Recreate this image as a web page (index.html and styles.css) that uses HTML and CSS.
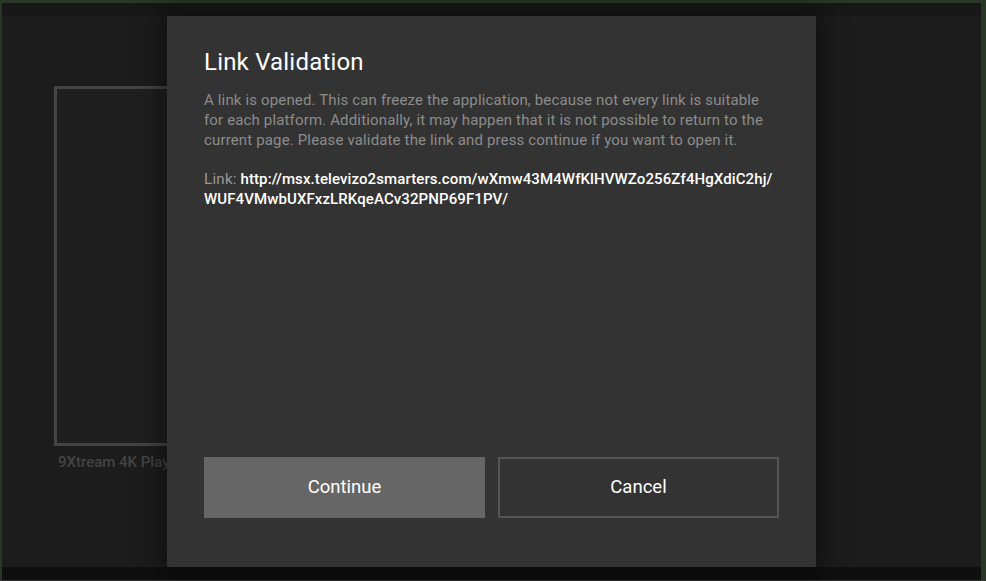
FILE: index.html
```html
<!DOCTYPE html>
<html>
<head>
<meta charset="utf-8">
<link rel="stylesheet" href="styles.css">
</head>
<body>
<div class="screen">
  <div class="app">
    <div class="topbar"></div>
    <div class="content">
      <div class="tile">
        <div class="tile-frame"></div>
        <div class="tile-label">9Xtream 4K Player</div>
      </div>
    </div>
    <div class="bottombar"></div>
  </div>
  <div class="dialog">
    <h1 class="title">Link Validation</h1>
    <p class="desc">A link is opened. This can freeze the application, because not every link is suitable for each platform. Additionally, it may happen that it is not possible to return to the current page. Please validate the link and press continue if you want to open it.</p>
    <p class="link"><span class="link-label">Link:</span> <span class="link-url">http://msx.televizo2smarters.com/wXmw43M4WfKlHVWZo256Zf4HgXdiC2hj/ WUF4VMwbUXFxzLRKqeACv32PNP69F1PV/</span></p>
    <div class="actions">
      <div class="btn btn-primary">Continue</div>
      <div class="btn btn-secondary">Cancel</div>
    </div>
  </div>
</div>
</body>
</html>
```

FILE: styles.css
```css
html, body {
  margin: 0;
  padding: 0;
  background: #2a3728;
  font-family: Roboto, "Liberation Sans", sans-serif;
}

.screen {
  position: relative;
  width: 986px;
  height: 581px;
  padding: 3px 5px 1px 2px;
  box-sizing: border-box;
  overflow: hidden;
}

.app {
  display: flex;
  flex-direction: column;
  height: 100%;
  background: #1c1c1c;
}

.topbar {
  height: 13px;
  background: #181818;
}

.bottombar {
  height: 13px;
  background: #0f0f0f;
}

.content {
  flex: 1;
  padding: 70px 0 0 52px;
}

.tile {
  width: 300px;
}

.tile-frame {
  height: 354px;
  border: 3px solid #444444;
  background: #1f1f1f;
}

.tile-label {
  margin-top: 7px;
  font-size: 15px;
  font-weight: 500;
  color: #444444;
  padding-left: 4px;
  line-height: 18px;
}

.dialog {
  position: absolute;
  left: 167px;
  top: 16px;
  width: 649px;
  height: 551px;
  box-sizing: border-box;
  padding: 31px 37px 49px;
  background: #333333;
  box-shadow: 0 0 24px 6px rgba(0, 0, 0, 0.45);
  display: flex;
  flex-direction: column;
}

.title {
  margin: 0;
  font-size: 24px;
  font-weight: 400;
  line-height: 30px;
  letter-spacing: 0.2px;
  color: #ffffff;
}

.desc {
  margin: 13px 0 0;
  font-size: 15px;
  line-height: 20px;
  letter-spacing: 0.15px;
  color: #8c8c8c;
}

.link {
  margin: 19px 0 0;
  font-size: 15px;
  line-height: 20px;
}

.link-label {
  color: #999999;
  letter-spacing: 0.3px;
}

.link-url {
  color: #ffffff;
  font-weight: 500;
  letter-spacing: 0.1px;
}

.actions {
  margin-top: auto;
  display: flex;
  gap: 13px;
}

.btn {
  width: 281px;
  height: 61px;
  box-sizing: border-box;
  display: flex;
  align-items: center;
  justify-content: center;
  font-size: 18.5px;
  color: #ffffff;
  padding-bottom: 2px;
}

.btn-primary {
  background: #666666;
}

.btn-secondary {
  border: 2px solid #555555;
  background: #333333;
}
```
